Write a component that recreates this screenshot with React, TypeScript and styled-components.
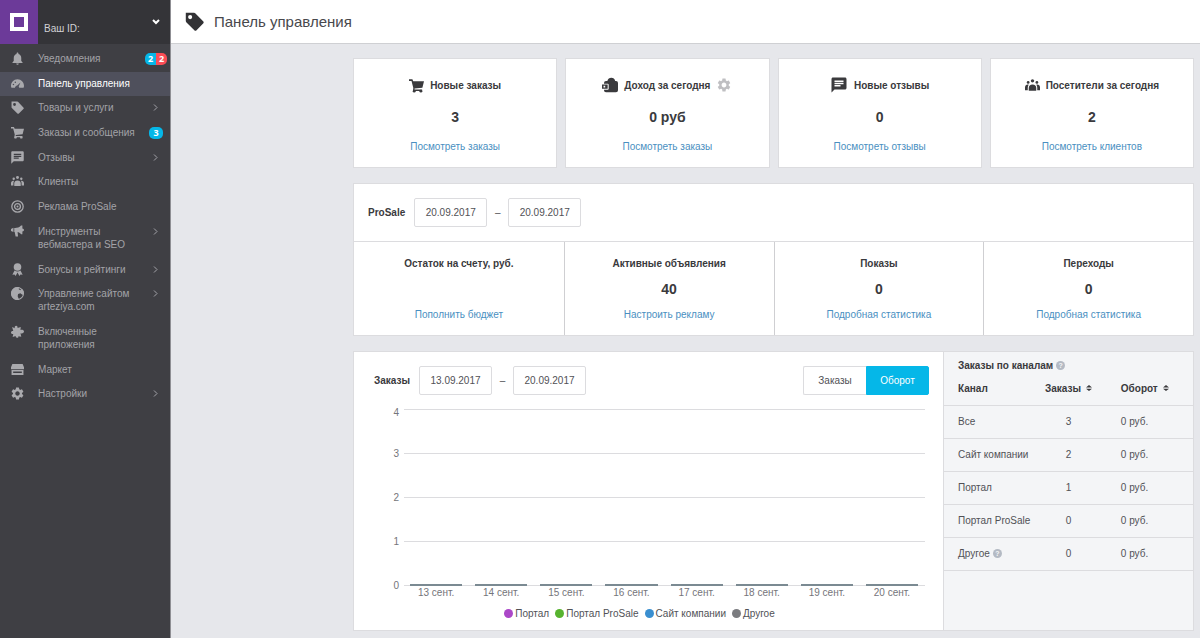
import React from 'react';
import styled, { createGlobalStyle, css } from 'styled-components';
import { MdChat, MdNotifications, MdSettings } from 'react-icons/md';

const colors = {
  ink: '#3a3a3d',
  text: '#515156',
  muted: '#75757a',
  link: '#4a8fc1',
  cyan: '#05b7e8',
  red: '#fb4c55',
  line: '#dcdcdf',
  page: '#e6e7eb',
  menuText: '#a3a3a8',
};

const GlobalStyle = createGlobalStyle`
  *, *::before, *::after { box-sizing: border-box; }
  body {
    margin: 0;
    background: ${colors.page};
    color: ${colors.text};
    font-family: "Liberation Sans", Arial, sans-serif;
    font-size: 10px;
    line-height: 13px;
  }
  a { text-decoration: none; }
  h1, h2, h3, p, ul { margin: 0; padding: 0; }
  ul { list-style: none; }
  button, input { font: inherit; color: inherit; }
`;

/* ---------- icons ---------- */

type IconProps = { size?: number };

const Svg = ({ size = 13, children }: IconProps & { children: React.ReactNode }) => (
  <svg width={size} height={size} viewBox="0 0 24 24" fill="currentColor" aria-hidden="true">
    {children}
  </svg>
);

const BellIcon = ({ size = 15 }: IconProps) => <MdNotifications size={size} />;
const TagIcon = ({ size = 13 }: IconProps) => (
  <Svg size={size}>
    <path
      fillRule="evenodd"
      d="M1 1h10.500a2 2 0 0 1 1.400.600l10 10.200a2 2 0 0 1 0 2.800l-8.300 8.400a2 2 0 0 1-2.800 0L1.600 12.800A2 2 0 0 1 1 11.400zM6.500 3.800a2.600 2.600 0 1 0 0 5.200 2.600 2.600 0 0 0 0-5.200z"
    />
  </Svg>
);
const ChatIcon = ({ size = 15 }: IconProps) => <MdChat size={size} />;
const GearIcon = ({ size = 15 }: IconProps) => <MdSettings size={size} />;

const GaugeIcon = () => (
  <Svg>
    <path
      fillRule="evenodd"
      d="M12 4C5 4 0 9.500 0 16c0 1.700.300 3 .900 4h6.300c.600-2.400 2-4.500 4.200-4.500l6.100-5.500-3.300 7.400c.6.700.9 1.600 1 2.600h7.900c.6-1 .9-2.300.9-4 0-6.500-5-12-12-12zM4.500 12.500a1.400 1.400 0 1 1 0 2.800 1.400 1.400 0 0 1 0-2.800zm3.500-4a1.400 1.400 0 1 1 0 2.800 1.400 1.400 0 0 1 0-2.800z"
    />
  </Svg>
);
const CartIcon = ({ size = 13 }: IconProps) => (
  <Svg size={size}>
    <path d="M0 2h5.400l1.400 3H24l-2.600 10.400-12.500 1.400-.3 1.700H21v2.200H6.300l.6-4.800L4 4.600H0z" />
    <circle cx="8.300" cy="21" r="2.300" />
    <circle cx="19" cy="21" r="2.300" />
  </Svg>
);
const PeopleIcon = ({ size = 13 }: IconProps) => (
  <Svg size={size}>
    <circle cx="12" cy="4.500" r="2.700" />
    <circle cx="5" cy="7" r="2.200" />
    <circle cx="19" cy="7" r="2.200" />
    <path d="M6 20.500v-4.700c0-3.600 2.200-5.600 6-5.600s6 2 6 5.600v4.700z" />
    <path d="M0 19.500v-4.300c0-2.900 1.800-4.700 4.600-4.700.500 0 .9.100 1.200.300-1 1.300-1.400 3-1.400 5v3.700z" />
    <path d="M24 19.500v-4.300c0-2.900-1.800-4.700-4.600-4.700-.500 0-.9.100-1.200.300 1 1.300 1.400 3 1.400 5v3.700z" />
  </Svg>
);
const TargetIcon = () => (
  <Svg>
    <g fill="none" stroke="currentColor">
      <circle cx="12" cy="12" r="10.500" strokeWidth="2.400" />
      <circle cx="12" cy="12" r="5.400" strokeWidth="2.400" />
    </g>
    <circle cx="12" cy="12" r="1.800" />
  </Svg>
);
const MegaphoneIcon = () => (
  <Svg>
    <path d="M0 7.500 4.500 5v8L0 11z" />
    <path d="M6 5.500c4.500.300 9-.700 12.500-4.500L21 1v5.500c1.800.2 3 1.200 3 2.700s-1.200 2.500-3 2.700V17h-2.500c-2-2.200-4.200-3.400-6.300-4l.8 8H8.500L6.800 13H6z" />
  </Svg>
);
const RibbonIcon = () => (
  <Svg>
    <circle cx="12" cy="7.500" r="7" />
    <path d="M6.500 14c3.300 2.300 7.700 2.300 11 0l4 7.500-4-.5-2 3-3.500-6.500L8.500 24l-2-3-4 .5z" />
  </Svg>
);
const GlobeIcon = () => (
  <Svg>
    <circle cx="12" cy="12" r="11" fill="none" stroke="currentColor" strokeWidth="2" />
    <path d="M12 0a12 12 0 1 0 3 23.600L12.300 17l.8-4.200 4.100-1.300 3.800 3 2.800-1A12 12 0 0 0 20.300 3.400L17 5.800l-3-2.300L15.800.6A12 12 0 0 0 12 0z" />
  </Svg>
);
const PuzzleIcon = () => (
  <Svg>
    <path d="M2 3.500 7 6c-.8-2.700.5-4.700 2.500-4.700s3.300 2 2.500 4.200l6-2-.5 5.700c3.200-1 6.500.3 6.500 3s-3.300 4-6.500 3l1.500 6.300-5.500-.8c.7 2-.5 3-2.300 3s-3-1.300-2.400-3.200L3 22l1.200-5.300C1.800 17.200 0 16 0 14s1.800-3.200 4.200-2.700z" />
  </Svg>
);
const StoreIcon = () => (
  <Svg>
    <path
      fillRule="evenodd"
      d="M2.500 2h19L24 8v3.500H0V8zM1 13h22v9H1zm3 2.500v3h16v-3z"
    />
  </Svg>
);
const WalletIcon = () => (
  <Svg size={16}>
    <path
      fillRule="evenodd"
      d="M8 6c1-3.400 3-5 6-5s5 1.600 5.800 5H21a3 3 0 0 1 3 3v11a3 3 0 0 1-3 3H6a3 3 0 0 1-3-3v-1h5.500A1.500 1.500 0 0 0 10 17.500v-6A1.500 1.500 0 0 0 8.500 10H3V9a3 3 0 0 1 3-3z"
    />
    <path d="M0 11.300h8.500v6.200H0zm2.300 2v2.300h2.500v-2.300z" fillRule="evenodd" />
  </Svg>
);
const ChevronRight = () => (
  <svg width="5" height="7" viewBox="0 0 5 7" fill="none" stroke="currentColor" aria-hidden="true">
    <path d="M1 .5 4 3.500l-3 3" />
  </svg>
);
const ChevronDown = () => (
  <svg width="8" height="6" viewBox="0 0 8 6" fill="none" stroke="currentColor" strokeWidth="2" aria-hidden="true">
    <path d="M1 1l3 3 3-3" />
  </svg>
);
const SortIcon = () => (
  <svg width="6" height="6" viewBox="0 0 6 6" fill="currentColor" aria-hidden="true">
    <path d="M0 2.500 3 0l3 2.500zM0 3.800h6L3 6z" />
  </svg>
);

/* ---------- sidebar ---------- */

const Page = styled.div`
  display: flex;
  min-height: 100vh;
`;

const Sidebar = styled.aside`
  flex: 0 0 171px;
  background: #3f3f44;
  border-right: 1px solid #8f8f94;
  color: ${colors.menuText};
`;

const Account = styled.div`
  display: flex;
  height: 44px;
  background: #343438;
`;

const Logo = styled.a`
  display: flex;
  align-items: center;
  justify-content: center;
  width: 38px;
  background: #6c3a99;

  &::before {
    content: '';
    width: 18px;
    height: 18px;
    border: 4px solid #fff;
  }
`;

const AccountButton = styled.button`
  flex: 1;
  display: flex;
  align-items: center;
  justify-content: space-between;
  padding: 0 10px 0 6px;
  border: 0;
  background: none;
  color: #fff;

  span {
    padding-top: 12px;
    color: #d2d2d5;
  }
`;

const Menu = styled.ul`
  display: flex;
  flex-direction: column;
  min-height: 363px;
  padding-top: 3px;
`;

const MenuItem = styled.li`
  flex: 1 0 auto;
  display: flex;
`;

const MenuLink = styled.a<{ $active?: boolean }>`
  flex: 1;
  display: flex;
  align-items: flex-start;
  padding: 5px 12px 6px 10px;
  color: inherit;

  ${(p) =>
    p.$active &&
    css`
      background: #4f505c;
      color: #fff;
    `}
`;

const MenuIcon = styled.span`
  flex: 0 0 15px;
  display: flex;
  align-items: center;
  justify-content: center;
  height: 13px;
  margin-right: 13px;
  color: #a9a9ad;

  svg {
    flex: none;
  }
`;

const MenuLabel = styled.span`
  flex: 1;
  white-space: pre-line;
`;

const MenuEnd = styled.span<{ $badge?: boolean }>`
  display: flex;
  align-items: center;
  height: 13px;
  margin-right: ${(p) => (p.$badge ? '-9px' : '0')};
`;

const Badge = styled.span`
  display: flex;
  overflow: hidden;
  border-radius: 5px;
`;

const Count = styled.b<{ $tone?: 'red'; $wide?: boolean }>`
  width: ${(p) => (p.$wide ? 14 : 11)}px;
  background: ${(p) => (p.$tone === 'red' ? colors.red : colors.cyan)};
  color: #fff;
  font-family: "Open Sans", sans-serif;
  font-size: 9px;
  line-height: 12px;
  text-align: center;
`;

const SingleBadge = styled(Badge)`
  margin-right: 4px;
`;

type Entry = {
  label: string;
  icon: React.ReactNode;
  active?: boolean;
  more?: boolean;
  end?: React.ReactNode;
};

const entries: Entry[] = [
  {
    label: 'Уведомления',
    icon: <BellIcon />,
    end: (
      <Badge>
        <Count>2</Count>
        <Count $tone="red">2</Count>
      </Badge>
    ),
  },
  { label: 'Панель управления', icon: <GaugeIcon />, active: true },
  { label: 'Товары и услуги', icon: <TagIcon />, more: true },
  {
    label: 'Заказы и сообщения',
    icon: <CartIcon />,
    end: (
      <SingleBadge>
        <Count $wide>3</Count>
      </SingleBadge>
    ),
  },
  { label: 'Отзывы', icon: <ChatIcon />, more: true },
  { label: 'Клиенты', icon: <PeopleIcon /> },
  { label: 'Реклама ProSale', icon: <TargetIcon /> },
  { label: 'Инструменты\nвебмастера и SEO', icon: <MegaphoneIcon />, more: true },
  { label: 'Бонусы и рейтинги', icon: <RibbonIcon />, more: true },
  { label: 'Управление сайтом\narteziya.com', icon: <GlobeIcon />, more: true },
  { label: 'Включенные\nприложения', icon: <PuzzleIcon /> },
  { label: 'Маркет', icon: <StoreIcon /> },
  { label: 'Настройки', icon: <GearIcon />, more: true },
];

/* ---------- page parts ---------- */

const Main = styled.main`
  flex: 1;
  min-width: 0;
`;

const TopBar = styled.header`
  display: flex;
  align-items: center;
  gap: 10px;
  height: 44px;
  padding-left: 14px;
  background: #fff;
  border-bottom: 1px solid #cfd0d3;
  color: #323235;
`;

const Title = styled.h1`
  font-size: 15px;
  font-weight: 400;
  line-height: 20px;
  color: #48484c;
`;

const Content = styled.div`
  display: flex;
  flex-direction: column;
  gap: 15px;
  padding: 14px 6px 7px 182px;
`;

const surface = css`
  background: #fff;
  border: 1px solid ${colors.line};
`;

const Cards = styled.div`
  display: grid;
  grid-template-columns: repeat(4, 1fr);
  gap: 8px;
`;

const Card = styled.section`
  ${surface}
  display: flex;
  flex-direction: column;
  align-items: center;
  height: 110px;
  padding-top: 17px;
`;

const CardTitle = styled.h2`
  display: flex;
  align-items: center;
  gap: 6px;
  height: 18px;
  font-size: 10px;
  line-height: 13px;
  color: ${colors.ink};
`;

const GearButton = styled.button`
  display: flex;
  padding: 0;
  border: 0;
  background: none;
  color: #bfbfc2;
`;

const BigNumber = styled.p`
  height: 20px;
  font-size: 14px;
  font-weight: 700;
  line-height: 20px;
  color: ${colors.ink};
`;

const CardNumber = styled(BigNumber)`
  margin: 13px 0 13px;
`;

const TextLink = styled.a`
  color: ${colors.link};
`;

const Panel = styled.section`
  ${surface}
`;

const PanelHead = styled.div`
  display: flex;
  align-items: center;
  height: 57px;
  padding-left: 14px;
`;

const PanelTitle = styled.h2`
  margin-right: 9px;
  font-size: 10px;
  line-height: 13px;
  color: ${colors.ink};
`;

const DateInput = styled.input`
  width: 73px;
  height: 29px;
  padding: 0;
  border: 1px solid ${colors.line};
  border-radius: 2px;
  background: #fff;
  text-align: center;
`;

const Dash = styled.span`
  width: 21px;
  text-align: center;
`;

const Stats = styled.div`
  display: grid;
  grid-template-columns: repeat(4, 1fr);
  border-top: 1px solid ${colors.line};
`;

const Stat = styled.div`
  display: flex;
  flex-direction: column;
  align-items: center;
  height: 93px;
  padding-top: 15px;

  & + & {
    border-left: 1px solid #cfcfd2;
  }
`;

const StatTitle = styled.h3`
  font-size: 10px;
  line-height: 13px;
  color: ${colors.ink};
`;

const StatNumber = styled(BigNumber)`
  margin: 9px 0 9px;
`;

const OrdersPanel = styled(Panel)`
  display: grid;
  grid-template-columns: 1fr 250px;
  min-height: 280px;
`;

const ChartSide = styled.div`
  padding-right: 18px;
`;

const ChartHead = styled(PanelHead)`
  padding-left: 20px;
  margin-right: -4px;
`;

const Toggle = styled.div`
  display: flex;
  margin-left: auto;
`;

const ToggleButton = styled.button<{ $on?: boolean }>`
  width: 63px;
  height: 29px;
  padding: 0;
  border: 1px solid ${(p) => (p.$on ? colors.cyan : colors.line)};
  border-right-width: ${(p) => (p.$on ? 1 : 0)}px;
  border-radius: ${(p) => (p.$on ? '0 2px 2px 0' : '2px 0 0 2px')};
  background: ${(p) => (p.$on ? colors.cyan : '#fff')};
  color: ${(p) => (p.$on ? '#fff' : colors.text)};
`;

const Plot = styled.div`
  color: ${colors.muted};
`;

const GridRow = styled.div`
  display: flex;
  height: 44px;

  &:last-child {
    height: 22px;
  }
`;

const Tick = styled.span`
  width: 50px;
  margin-top: -6px;
  padding-right: 5px;
  text-align: right;

  ${GridRow}:first-child & {
    margin-top: -3px;
  }
`;

const GridLine = styled.div`
  flex: 1;
  border-top: 1px solid ${colors.line};
`;

const Bars = styled(GridLine)`
  display: grid;
  grid-template-columns: repeat(8, 1fr);
`;

const Bar = styled.div`
  padding: 0 7px 0 6px;
  text-align: center;

  &::before {
    content: '';
    display: block;
    height: 2px;
    margin-top: -2px;
    background: #7b8a92;
  }
`;

const Legend = styled.ul`
  display: flex;
  justify-content: center;
  gap: 6px;
`;

const LegendItem = styled.li<{ $color: string }>`
  display: flex;
  align-items: center;
  gap: 2px;

  &::before {
    content: '';
    width: 9px;
    height: 9px;
    border-radius: 50%;
    background: ${(p) => p.$color};
  }
`;

const Channels = styled.div`
  background: #f4f5f7;
  border-left: 1px solid ${colors.line};
`;

const ChannelsTitle = styled.h2`
  display: flex;
  align-items: center;
  gap: 3px;
  padding: 7px 14px 0;
  font-size: 10px;
  line-height: 13px;
  color: ${colors.ink};
`;

const Help = styled.span`
  display: inline-flex;
  align-items: center;
  justify-content: center;
  width: 9px;
  height: 9px;
  border-radius: 50%;
  background: #b4bac4;
  color: #f4f5f7;
  font-size: 7px;
  font-weight: 700;
  line-height: 9px;
`;

const Table = styled.table`
  width: 100%;
  border-collapse: collapse;
  table-layout: fixed;

  th,
  td {
    height: 33px;
    padding: 0;
    border-bottom: 1px solid ${colors.line};
    text-align: left;
    white-space: nowrap;
  }
  th {
    color: ${colors.ink};
  }
  th:first-child,
  td:first-child {
    width: 35%;
    padding-left: 14px;
  }
  th:nth-child(2),
  td:nth-child(2) {
    width: 30%;
    text-align: center;
  }
  th:last-child,
  td:last-child {
    padding-left: 15px;
  }
`;

const SortButton = styled.button`
  display: inline-flex;
  align-items: center;
  gap: 5px;
  padding: 0;
  border: 0;
  background: none;
  font-weight: 700;
`;

const ChannelName = styled.span`
  display: flex;
  align-items: center;
  gap: 3px;
`;

const cards = [
  { title: 'Новые заказы', value: '3', link: 'Посмотреть заказы', icon: <CartIcon size={15} /> },
  { title: 'Доход за сегодня', value: '0 руб', link: 'Посмотреть заказы', icon: <WalletIcon />, gear: true },
  { title: 'Новые отзывы', value: '0', link: 'Посмотреть отзывы', icon: <ChatIcon size={18} /> },
  { title: 'Посетители за сегодня', value: '2', link: 'Посмотреть клиентов', icon: <PeopleIcon size={15} /> },
];

const stats = [
  { title: 'Остаток на счету, руб.', value: '', link: 'Пополнить бюджет' },
  { title: 'Активные объявления', value: '40', link: 'Настроить рекламу' },
  { title: 'Показы', value: '0', link: 'Подробная статистика' },
  { title: 'Переходы', value: '0', link: 'Подробная статистика' },
];

const days = [13, 14, 15, 16, 17, 18, 19, 20];

const legend = [
  { label: 'Портал', color: '#ab47c8' },
  { label: 'Портал ProSale', color: '#57b32f' },
  { label: 'Сайт компании', color: '#3a8fd0' },
  { label: 'Другое', color: '#7b7c80' },
];

const channels = [
  { name: 'Все', orders: 3 },
  { name: 'Сайт компании', orders: 2 },
  { name: 'Портал', orders: 1 },
  { name: 'Портал ProSale', orders: 0 },
  { name: 'Другое', orders: 0, help: true },
];

const DateRange = ({ from, to, name }: { from: string; to: string; name: string }) => (
  <>
    <DateInput type="text" defaultValue={from} aria-label={`${name}: с`} />
    <Dash>–</Dash>
    <DateInput type="text" defaultValue={to} aria-label={`${name}: по`} />
  </>
);

export default function App() {
  return (
    <Page>
      <GlobalStyle />
      <Sidebar>
        <Account>
          <Logo href="#" aria-label="Главная" />
          <AccountButton type="button">
            <span>Ваш ID:</span>
            <ChevronDown />
          </AccountButton>
        </Account>
        <nav>
          <Menu>
            {entries.map((e) => (
              <MenuItem key={e.label}>
                <MenuLink href="#" $active={e.active}>
                  <MenuIcon>{e.icon}</MenuIcon>
                  <MenuLabel>{e.label}</MenuLabel>
                  {e.end && <MenuEnd $badge>{e.end}</MenuEnd>}
                  {e.more && (
                    <MenuEnd>
                      <ChevronRight />
                    </MenuEnd>
                  )}
                </MenuLink>
              </MenuItem>
            ))}
          </Menu>
        </nav>
      </Sidebar>

      <Main>
        <TopBar>
          <TagIcon size={19} />
          <Title>Панель управления</Title>
        </TopBar>
        <Content>
          <Cards>
            {cards.map((c) => (
              <Card key={c.title}>
                <CardTitle>
                  {c.icon}
                  {c.title}
                  {c.gear && (
                    <GearButton type="button" aria-label="Настроить">
                      <GearIcon size={16} />
                    </GearButton>
                  )}
                </CardTitle>
                <CardNumber>{c.value}</CardNumber>
                <TextLink href="#">{c.link}</TextLink>
              </Card>
            ))}
          </Cards>

          <Panel>
            <PanelHead>
              <PanelTitle>ProSale</PanelTitle>
              <DateRange name="ProSale" from="20.09.2017" to="20.09.2017" />
            </PanelHead>
            <Stats>
              {stats.map((s) => (
                <Stat key={s.title}>
                  <StatTitle>{s.title}</StatTitle>
                  <StatNumber>{s.value}</StatNumber>
                  <TextLink href="#">{s.link}</TextLink>
                </Stat>
              ))}
            </Stats>
          </Panel>

          <OrdersPanel>
            <ChartSide>
              <ChartHead>
                <PanelTitle>Заказы</PanelTitle>
                <DateRange name="Заказы" from="13.09.2017" to="20.09.2017" />
                <Toggle>
                  <ToggleButton type="button">Заказы</ToggleButton>
                  <ToggleButton type="button" $on>
                    Оборот
                  </ToggleButton>
                </Toggle>
              </ChartHead>
              <Plot>
                {[4, 3, 2, 1].map((n) => (
                  <GridRow key={n}>
                    <Tick>{n}</Tick>
                    <GridLine />
                  </GridRow>
                ))}
                <GridRow>
                  <Tick>0</Tick>
                  <Bars>
                    {days.map((d) => (
                      <Bar key={d}>{d} сент.</Bar>
                    ))}
                  </Bars>
                </GridRow>
              </Plot>
              <Legend>
                {legend.map((l) => (
                  <LegendItem key={l.label} $color={l.color}>
                    {l.label}
                  </LegendItem>
                ))}
              </Legend>
            </ChartSide>
            <Channels>
              <ChannelsTitle>
                Заказы по каналам <Help>?</Help>
              </ChannelsTitle>
              <Table>
                <thead>
                  <tr>
                    <th scope="col">Канал</th>
                    <th scope="col">
                      <SortButton type="button">
                        Заказы <SortIcon />
                      </SortButton>
                    </th>
                    <th scope="col">
                      <SortButton type="button">
                        Оборот <SortIcon />
                      </SortButton>
                    </th>
                  </tr>
                </thead>
                <tbody>
                  {channels.map((c) => (
                    <tr key={c.name}>
                      <td>
                        <ChannelName>
                          {c.name}
                          {c.help && <Help>?</Help>}
                        </ChannelName>
                      </td>
                      <td>{c.orders}</td>
                      <td>0 руб.</td>
                    </tr>
                  ))}
                </tbody>
              </Table>
            </Channels>
          </OrdersPanel>
        </Content>
      </Main>
    </Page>
  );
}
